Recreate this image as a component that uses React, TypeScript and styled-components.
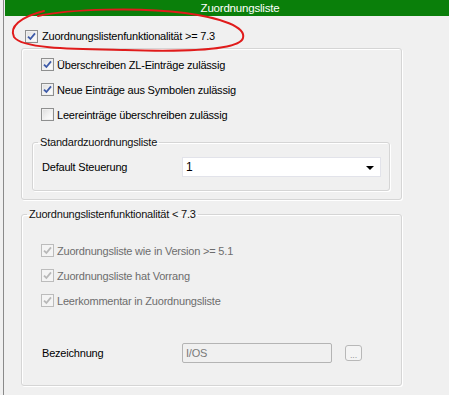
import React from 'react';
import styled, { createGlobalStyle } from 'styled-components';

const GlobalStyle = createGlobalStyle`
  html, body {
    margin: 0;
    padding: 0;
    background: #f0f0f0;
  }
  body {
    font-family: "Liberation Sans", Arial, sans-serif;
    font-size: 11px;
    letter-spacing: -0.2px;
    color: #000;
  }
`;

const Page = styled.div`
  position: relative;
  width: 449px;
  height: 395px;
  padding-left: 3px;
  box-sizing: border-box;
  background: #f0f0f0;
  overflow: hidden;
`;

const Panel = styled.div`
  height: 100%;
  border-left: 1px solid #8a8a8a;
  padding-left: 1px;
`;

const TitleBar = styled.div`
  height: 16px;
  background: #0a7f0a;
  color: #fff;
  display: flex;
  align-items: center;
  justify-content: center;
  padding-left: 26px;
  font-size: 11.5px;
`;

const Content = styled.div`
  padding: 12px 47px 0 16px;
  display: flex;
  flex-direction: column;
`;

const MainRow = styled.label`
  height: 16px;
  display: flex;
  align-items: center;
  gap: 4px;
  margin-left: 4px;
  margin-bottom: 4px;
`;

const Group = styled.fieldset<{ $top?: number }>`
  margin: ${p => p.$top ?? 0}px 0 0 0;
  padding: 0;
  min-width: 0;
  border: 1px solid #d5d5d5;
  border-radius: 3px;
  box-shadow: inset 1px 1px 0 #fff, 1px 1px 0 #fff;
`;

const Legend = styled.legend`
  margin-left: 5px;
  padding: 0 2px;
  line-height: 15px;
  color: #111;
`;

const GroupBody = styled.div<{ $pad: string }>`
  padding: ${p => p.$pad};
  display: flex;
  flex-direction: column;
`;

const CheckRow = styled.label<{ $disabled?: boolean; $indent: number }>`
  height: 25px;
  display: flex;
  align-items: center;
  gap: 3px;
  padding-left: ${p => p.$indent}px;
  color: ${p => (p.$disabled ? '#6d6d6d' : '#000')};
`;

const FieldRow = styled.div<{ $indent: number; $top?: number }>`
  display: flex;
  align-items: center;
  height: 20px;
  padding-left: ${p => p.$indent}px;
  margin-top: ${p => p.$top ?? 0}px;
`;

const FieldLabel = styled.span<{ $width: number }>`
  width: ${p => p.$width}px;
  flex: none;
`;

const Combo = styled.div`
  width: 200px;
  height: 20px;
  box-sizing: border-box;
  background: #fff;
  border: 1px solid #e2e3ea;
  display: flex;
  align-items: center;
  justify-content: space-between;
  padding: 0 6px 0 3px;
  font-size: 12px;
`;

const Arrow = styled.span`
  width: 0;
  height: 0;
  border-left: 4px solid transparent;
  border-right: 4px solid transparent;
  border-top: 4px solid #000;
  margin-top: 1px;
`;

const TextBox = styled.div`
  width: 150px;
  height: 20px;
  box-sizing: border-box;
  border: 1px solid #b4b4b4;
  border-radius: 2px;
  background: #f0f0f0;
  color: #7a7a7a;
  display: flex;
  align-items: center;
  padding-left: 3px;
`;

const DotsButton = styled.div`
  width: 17px;
  height: 16px;
  box-sizing: border-box;
  margin-left: 13px;
  border: 1px solid #b8b8b8;
  border-radius: 3px;
  background: #f4f4f4;
  color: #9a9a9a;
  font-size: 9px;
  display: flex;
  align-items: flex-end;
  justify-content: center;
  line-height: 10px;
`;

const Box = styled.span<{ $disabled?: boolean }>`
  width: 13px;
  height: 13px;
  box-sizing: border-box;
  flex: none;
  border: 1px solid ${p => (p.$disabled ? '#bcbcbc' : '#8e8f8f')};
  background: ${p =>
    p.$disabled
      ? '#f4f4f4'
      : 'linear-gradient(135deg, #dcdcdc 0%, #f4f4f4 60%, #ffffff 100%)'};
  box-shadow: inset 0 0 0 1px ${p => (p.$disabled ? '#f4f4f4' : '#f0f0f0')};
  display: flex;
  align-items: center;
  justify-content: center;
`;

const Scribble = styled.svg`
  position: absolute;
  left: 0;
  top: 0;
  pointer-events: none;
`;

const CheckBox: React.FC<{ checked?: boolean; disabled?: boolean }> = ({ checked, disabled }) => (
  <Box $disabled={disabled}>
    {checked && (
      <svg width="9" height="9" viewBox="0 0 9 9">
        <path
          d="M1 4.6 L3.4 7 L8 1.4"
          fill="none"
          stroke={disabled ? '#b8b8b8' : '#3d5aa8'}
          strokeWidth="1.8"
        />
      </svg>
    )}
  </Box>
);

const App: React.FC = () => {
  return (
    <Page>
      <GlobalStyle />
      <Panel>
        <TitleBar>Zuordnungsliste</TitleBar>
        <Content>
          <MainRow>
            <CheckBox checked />
            Zuordnungslistenfunktionalität &gt;= 7.3
          </MainRow>

          <Group>
            <GroupBody $pad="3px 11px 8px 10px">
              <CheckRow $indent={9}>
                <CheckBox checked />
                Überschreiben ZL-Einträge zulässig
              </CheckRow>
              <CheckRow $indent={9}>
                <CheckBox checked />
                Neue Einträge aus Symbolen zulässig
              </CheckRow>
              <CheckRow $indent={9}>
                <CheckBox />
                Leereinträge überschreiben zulässig
              </CheckRow>

              <Group $top={8}>
                <Legend>Standardzuordnungsliste</Legend>
                <GroupBody $pad="7px 8px 13px 9px">
                  <FieldRow $indent={0}>
                    <FieldLabel $width={140}>Default Steuerung</FieldLabel>
                    <Combo>
                      1
                      <Arrow />
                    </Combo>
                  </FieldRow>
                </GroupBody>
              </Group>
            </GroupBody>
          </Group>

          <Group $top={7}>
            <Legend>Zuordnungslistenfunktionalität &lt; 7.3</Legend>
            <GroupBody $pad="16px 0 22px 0">
              <CheckRow $disabled $indent={19}>
                <CheckBox checked disabled />
                Zuordnungsliste wie in Version &gt;= 5.1
              </CheckRow>
              <CheckRow $disabled $indent={19}>
                <CheckBox checked disabled />
                Zuordnungsliste hat Vorrang
              </CheckRow>
              <CheckRow $disabled $indent={19}>
                <CheckBox checked disabled />
                Leerkommentar in Zuordnungsliste
              </CheckRow>
              <FieldRow $indent={20} $top={30}>
                <FieldLabel $width={140}>Bezeichnung</FieldLabel>
                <TextBox>I/OS</TextBox>
                <DotsButton>...</DotsButton>
              </FieldRow>
            </GroupBody>
          </Group>
        </Content>
      </Panel>
      <Scribble width="449" height="395">
        <path
          d="M38 16 C 70 9, 140 7, 185 13 C 222 18, 246 27, 243 38 C 240 50, 185 52, 125 50 C 75 49, 22 49, 14 37 C 9 27, 20 17, 44 11"
          fill="none"
          stroke="#e01b1b"
          strokeWidth="2"
          strokeLinecap="round"
        />
      </Scribble>
    </Page>
  );
};

export default App;
